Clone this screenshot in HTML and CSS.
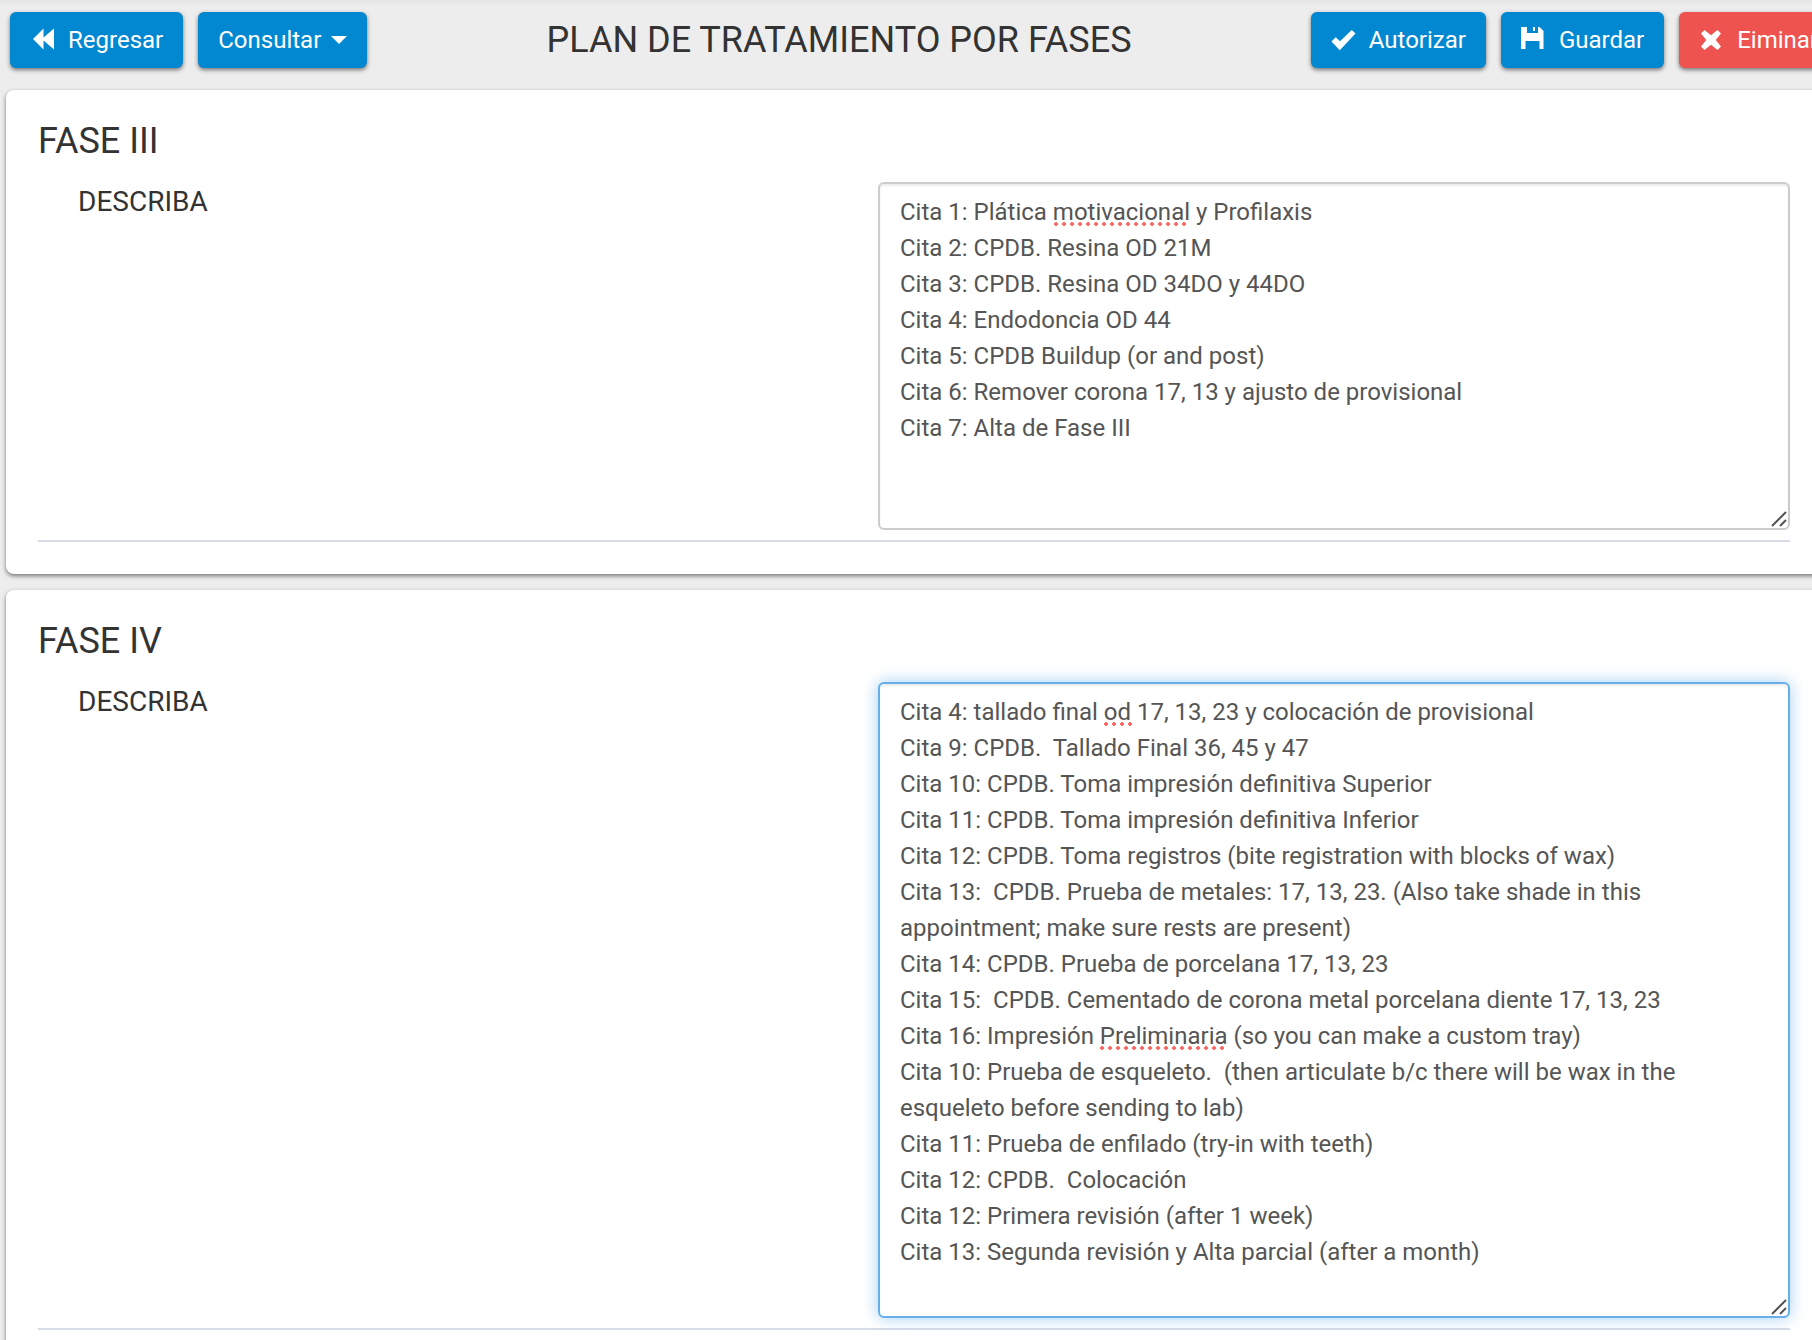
FILE: index.html
```html
<!DOCTYPE html>
<html lang="es">
<head>
<meta charset="utf-8">
<meta name="viewport" content="width=device-width, initial-scale=1">
<title>Plan de tratamiento por fases</title>
<link rel="stylesheet" href="styles.css">
</head>
<body>
<header class="toolbar">
  <div class="actions">
    <button type="button" class="btn">
      <svg class="icon" viewBox="0 0 24 24" aria-hidden="true"><path d="M13.500 0.500v9L24 0.500v21L13.500 12.500v9L3 11z"/></svg>
      Regresar
    </button>
    <button type="button" class="btn btn-menu" aria-haspopup="true">
      Consultar
      <span class="caret"></span>
    </button>
  </div>
  <h1 class="title">PLAN DE TRATAMIENTO POR FASES</h1>
  <div class="actions">
    <button type="button" class="btn">
      <svg class="icon" viewBox="0 0 24 24" aria-hidden="true"><path d="M0.500 13.500L4.700 9.300L9 13.300L20.700 2L24.500 5.600L8.800 22.300z"/></svg>
      Autorizar
    </button>
    <button type="button" class="btn">
      <svg class="icon" viewBox="0 1 24 24" aria-hidden="true"><path fill-rule="evenodd" d="M0 0H6V6H17V0H18.500L22.500 4V22H18.500V14H4.500V22H0zM12 0H14V4H12z"/></svg>
      Guardar
    </button>
    <button type="button" class="btn btn-danger">
      <svg class="icon" viewBox="0 0 24 24" aria-hidden="true"><path d="M2 5.500L5.500 2L12 7.300L18.500 2L22 5.500L16.700 12L22 18.500L18.500 22L12 16.700L5.500 22L2 18.500L7.300 12z"/></svg>
      Eiminar
    </button>
  </div>
</header>
<main class="phases">
  <section class="panel">
    <h2 class="panel-title">FASE III</h2>
    <div class="field">
      <label class="field-label" for="fase3">DESCRIBA</label>
      <div class="editor">
        <textarea id="fase3" class="text text-short" spellcheck="false">Cita 1: Plática motivacional y Profilaxis
Cita 2: CPDB. Resina OD 21M
Cita 3: CPDB. Resina OD 34DO y 44DO
Cita 4: Endodoncia OD 44
Cita 5: CPDB Buildup (or and post)
Cita 6: Remover corona 17, 13 y ajusto de provisional
Cita 7: Alta de Fase III</textarea>
        <span class="typo typo-motivacional"></span>
        <svg class="grip" viewBox="0 0 16 16" aria-hidden="true"><path d="M1 15L15 1M9 15L15 9"/></svg>
      </div>
    </div>
  </section>
  <section class="panel">
    <h2 class="panel-title">FASE IV</h2>
    <div class="field">
      <label class="field-label" for="fase4">DESCRIBA</label>
      <div class="editor">
        <textarea id="fase4" class="text text-long text-active" spellcheck="false">Cita 4: tallado final od 17, 13, 23 y colocación de provisional
Cita 9: CPDB.  Tallado Final 36, 45 y 47
Cita 10: CPDB. Toma impresión definitiva Superior
Cita 11: CPDB. Toma impresión definitiva Inferior
Cita 12: CPDB. Toma registros (bite registration with blocks of wax)
Cita 13:  CPDB. Prueba de metales: 17, 13, 23. (Also take shade in this appointment; make sure rests are present)
Cita 14: CPDB. Prueba de porcelana 17, 13, 23
Cita 15:  CPDB. Cementado de corona metal porcelana diente 17, 13, 23
Cita 16: Impresión Preliminaria (so you can make a custom tray)
Cita 10: Prueba de esqueleto.  (then articulate b/c there will be wax in the esqueleto before sending to lab)
Cita 11: Prueba de enfilado (try-in with teeth)
Cita 12: CPDB.  Colocación
Cita 12: Primera revisión (after 1 week)
Cita 13: Segunda revisión y Alta parcial (after a month)</textarea>
        <span class="typo typo-od"></span>
        <span class="typo typo-preliminaria"></span>
        <svg class="grip" viewBox="0 0 16 16" aria-hidden="true"><path d="M1 15L15 1M9 15L15 9"/></svg>
      </div>
    </div>
  </section>
</main>
</body>
</html>
```
FILE: styles.css
```css
* {
  box-sizing: border-box;
}

html {
  overflow: hidden;
}

body {
  margin: 0;
  overflow: hidden;
  background: #ededed;
  color: #333;
  font-family: Roboto, "Liberation Sans", sans-serif;
  font-size: 24px;
  line-height: 36px;
}

/* The toolbar and panels run past the right edge of the window. */
.toolbar {
  display: flex;
  align-items: flex-start;
  height: 90px;
  margin-right: -26px;
  padding: 12px 0 0 10px;
  background: linear-gradient(#e4e4e4, #ededed 6px);
}

.actions {
  display: flex;
  gap: 15px;
}

.title {
  flex: 1;
  margin: 0;
  font-size: 36px;
  font-weight: 400;
  line-height: 56px;
  text-align: center;
  white-space: nowrap;
}

.btn {
  display: flex;
  align-items: center;
  gap: 14px;
  height: 56px;
  padding: 0 20px;
  border: 0;
  border-radius: 6px;
  background: #0288d1;
  box-shadow: 0 2px 4px rgba(0, 0, 0, 0.5);
  color: #fff;
  font: 400 24px/36px Roboto, "Liberation Sans", sans-serif;
  white-space: nowrap;
}

.btn-menu {
  gap: 10px;
}

.btn-danger {
  background: #ef5350;
}

.icon {
  width: 24px;
  height: 24px;
  overflow: visible;
  fill: #fff;
}

.caret {
  border: 8px solid transparent;
  border-top-color: #fff;
  border-bottom: 0;
}

.phases {
  display: flex;
  flex-direction: column;
  gap: 16px;
  margin: 0 -10px 0 6px;
}

.panel {
  padding: 32px;
  border-radius: 8px;
  background: #fff;
  box-shadow: 0 2px 4px rgba(0, 0, 0, 0.5);
}

.panel-title {
  margin: 0 0 22px;
  font-size: 36px;
  font-weight: 400;
  line-height: 38px;
}

.field {
  display: grid;
  grid-template-columns: 35fr 38fr;
  padding-bottom: 10px;
  border-bottom: 2px solid #d8dce6;
}

.field-label {
  padding-left: 40px;
  font-size: 28px;
  line-height: 40px;
}

.editor {
  position: relative;
}

.text {
  display: block;
  width: 100%;
  padding: 10px 20px;
  border: 2px solid #ccc;
  border-radius: 6px;
  outline: 0;
  background: #fff;
  box-shadow: inset 0 2px 2px rgba(0, 0, 0, 0.08);
  color: #555;
  font: inherit;
  resize: vertical;
}

.text::-webkit-resizer {
  background: transparent;
}

.text-short {
  height: 348px;
}

.text-long {
  height: 636px;
}

.text-active {
  border-color: #66afe9;
  box-shadow: inset 0 2px 2px rgba(0, 0, 0, 0.08), 0 0 16px rgba(102, 175, 233, 0.6);
}

/* Spelling marks lie over the text of the box. */
.typo {
  position: absolute;
  height: 4px;
  background: radial-gradient(circle at 2px 2px, #ff6a64 2px, transparent 2px) 0 0 / 8px 4px;
  pointer-events: none;
}

.typo-motivacional {
  top: 40px;
  left: 176px;
  width: 136px;
}

.typo-od {
  top: 40px;
  left: 226px;
  width: 28px;
}

.typo-preliminaria {
  top: 364px;
  left: 222px;
  width: 128px;
}

.grip {
  position: absolute;
  right: 3px;
  bottom: 3px;
  width: 16px;
  height: 16px;
  fill: none;
  stroke: #555;
  stroke-width: 2;
  pointer-events: none;
}
```
